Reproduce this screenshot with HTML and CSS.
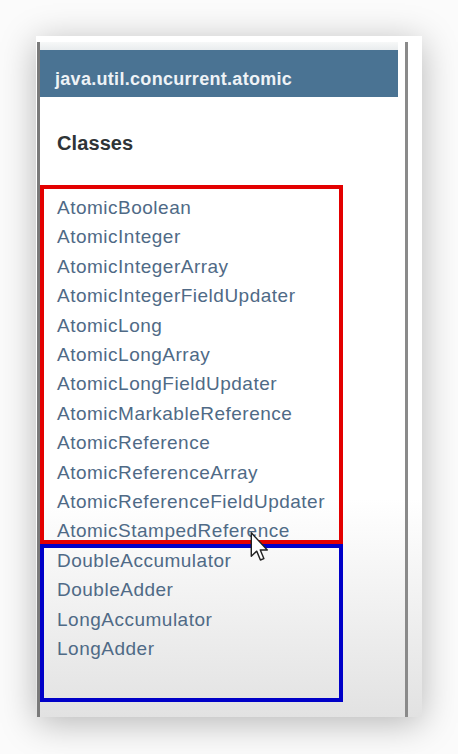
FILE: index.html
```html
<!DOCTYPE html>
<html>
<head>
<meta charset="utf-8">
<link rel="stylesheet" href="styles.css">
</head>
<body>
<div class="card">
  <div class="frame">
    <div class="topband"></div>
    <div class="header">java.util.concurrent.atomic</div>
    <h2 class="title">Classes</h2>
    <ul class="list">
      <li>AtomicBoolean</li>
      <li>AtomicInteger</li>
      <li>AtomicIntegerArray</li>
      <li>AtomicIntegerFieldUpdater</li>
      <li>AtomicLong</li>
      <li>AtomicLongArray</li>
      <li>AtomicLongFieldUpdater</li>
      <li>AtomicMarkableReference</li>
      <li>AtomicReference</li>
      <li>AtomicReferenceArray</li>
      <li>AtomicReferenceFieldUpdater</li>
      <li>AtomicStampedReference</li>
      <li>DoubleAccumulator</li>
      <li>DoubleAdder</li>
      <li>LongAccumulator</li>
      <li>LongAdder</li>
    </ul>
  </div>
  <div class="mark mark-red"></div>
  <div class="mark mark-blue"></div>
  <svg class="cursor" width="18" height="30" viewBox="0 0 12 21">
    <path d="M0.6 0.6 L0.6 17 L4.4 13.4 L7 19.6 L9.4 18.6 L6.9 12.6 L11.8 12.6 Z" fill="#fff" stroke="#222" stroke-width="1" stroke-linejoin="round"/>
  </svg>
</div>
</body>
</html>
```

FILE: styles.css
```css
html, body {
  margin: 0;
  padding: 0;
}
body {
  width: 458px;
  height: 754px;
  overflow: hidden;
  background: #fbfbfb;
  font-family: "Liberation Sans", Arial, sans-serif;
}
.card {
  position: relative;
  box-sizing: border-box;
  width: 386px;
  height: 681px;
  margin: 36px 0 0 36px;
  padding: 6px 14px 0 1px;
  display: flex;
  background: linear-gradient(to bottom, #ffffff 0%, #ffffff 68%, #e2e2e2 100%);
  box-shadow: 0 6px 34px rgba(0, 0, 0, 0.28);
}
.frame {
  flex: 1;
  border-left: 3px solid #7a7a7a;
  border-right: 3px solid #8a8a8a;
}
.topband {
  height: 8px;
  margin-right: 7px;
  background: linear-gradient(to bottom, #f7f8f8, #e9ecee);
}
.header {
  margin-right: 7px;
  padding: 19px 0 8px 15px;
  line-height: 20px;
  font-size: 18px;
  font-weight: 700;
  letter-spacing: 0.3px;
  color: #eef2f6;
  background: #4a7393;
}
.title {
  margin: 34px 0 0 0;
  padding-left: 17px;
  font-size: 20px;
  font-weight: 700;
  letter-spacing: 0.1px;
  line-height: 24px;
  color: #2f3437;
}
.list {
  list-style: none;
  margin: 38px 0 0 0;
  padding: 0 0 0 17px;
  font-size: 19px;
  letter-spacing: 0.5px;
  line-height: 29.4px;
  color: #4f6a86;
}
.mark {
  position: absolute;
  left: 4px;
  width: 303px;
  box-sizing: border-box;
  border: 4px solid;
}
.mark-red {
  top: 149px;
  height: 359px;
  border-color: #e30000;
}
.mark-blue {
  top: 508px;
  height: 158px;
  border-color: #0000c8;
}
.cursor {
  position: absolute;
  left: 214px;
  top: 496px;
}
```
